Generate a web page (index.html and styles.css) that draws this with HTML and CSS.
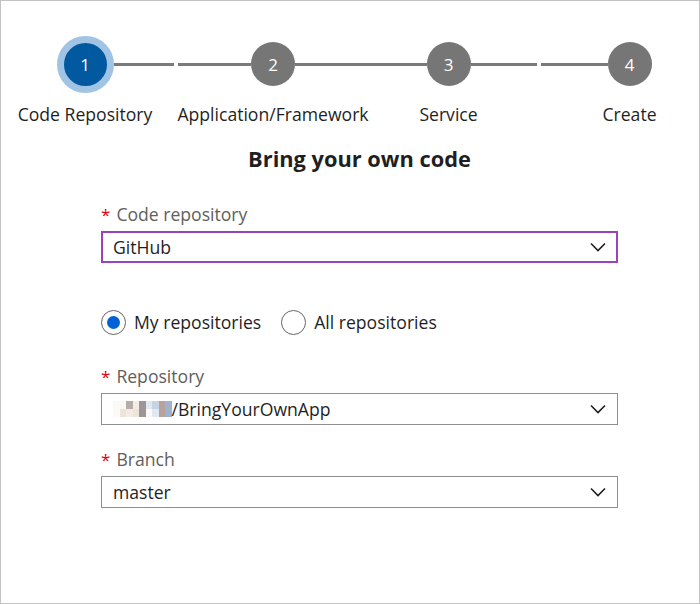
FILE: index.html
```html
<!DOCTYPE html>
<html lang="en">
<head>
<meta charset="utf-8">
<title>Bring your own code</title>
<link rel="stylesheet" href="styles.css">
</head>
<body>
<div class="frame">
  <div class="stepper">
    <div class="step step-wide">
      <div class="dot-area"><div class="dot dot-active">1</div></div>
      <div class="step-label">Code Repository</div>
    </div>
    <div class="line line-a"><span class="seg seg-a1"></span><span class="seg seg-fill"></span></div>
    <div class="step">
      <div class="dot-area"><div class="dot">2</div></div>
      <div class="step-label">Application/Framework</div>
    </div>
    <div class="line line-b"><span class="seg seg-fill"></span></div>
    <div class="step">
      <div class="dot-area"><div class="dot">3</div></div>
      <div class="step-label">Service</div>
    </div>
    <div class="line line-c"><span class="seg seg-c1"></span><span class="seg seg-fill"></span></div>
    <div class="step">
      <div class="dot-area"><div class="dot">4</div></div>
      <div class="step-label">Create</div>
    </div>
  </div>

  <div class="form">
    <h1 class="title">Bring your own code</h1>

    <div class="field field-first">
      <div class="label"><span class="req">*</span>Code repository</div>
      <div class="select select-focus">
        <span class="value">GitHub</span>
        <svg class="chev" width="16" height="10" viewBox="0 0 16 10"><path d="M1 1.5 L8 8.5 L15 1.5" fill="none" stroke="#1f1f1f" stroke-width="1.6"/></svg>
      </div>
    </div>

    <div class="radios">
      <label class="radio"><span class="ring ring-on"><span class="pip"></span></span>My repositories</label>
      <label class="radio"><span class="ring"></span>All repositories</label>
    </div>

    <div class="field field-repo">
      <div class="label"><span class="req">*</span>Repository</div>
      <div class="select">
        <span class="value"><span class="blur"><span class="blur-row"><i class="px p1"></i><i class="px p1"></i><i class="px p3"></i><i class="px p4"></i><i class="px p5"></i><i class="px p6"></i><i class="px p7"></i><i class="px p8"></i><i class="px p9"></i></span><span class="blur-row"><i class="px p1"></i><i class="px p2"></i><i class="px p4"></i><i class="px p2"></i><i class="px p5"></i><i class="px p1"></i><i class="px p6"></i><i class="px p8"></i><i class="px p9"></i></span></span>/BringYourOwnApp</span>
        <svg class="chev" width="16" height="10" viewBox="0 0 16 10"><path d="M1 1.5 L8 8.5 L15 1.5" fill="none" stroke="#1f1f1f" stroke-width="1.6"/></svg>
      </div>
    </div>

    <div class="field field-branch">
      <div class="label"><span class="req">*</span>Branch</div>
      <div class="select">
        <span class="value">master</span>
        <svg class="chev" width="16" height="10" viewBox="0 0 16 10"><path d="M1 1.5 L8 8.5 L15 1.5" fill="none" stroke="#1f1f1f" stroke-width="1.6"/></svg>
      </div>
    </div>
  </div>
</div>
</body>
</html>
```

FILE: styles.css
```css
* { box-sizing: border-box; }
html, body { margin: 0; padding: 0; background: #fff; }
body { font-family: "Segoe UI", "Open Sans", "Noto Sans", sans-serif; color: #1f1f1f; }

.frame {
  width: 700px;
  height: 604px;
  border: 1px solid #c3c3c3;
  background: #fff;
  overflow: hidden;
}

/* stepper */
.stepper {
  display: flex;
  align-items: flex-start;
  padding-left: 55.5px;
  padding-top: 34.5px;
}
.step {
  display: flex;
  flex-direction: column;
  align-items: center;
  width: 44px;
  flex: 0 0 44px;
}
.step-wide {
  width: 57px;
  flex: 0 0 57px;
}
.dot-area {
  height: 57px;
  display: flex;
  align-items: center;
  justify-content: center;
}
.dot {
  width: 44px;
  height: 44px;
  border-radius: 50%;
  background: #767676;
  color: #fff;
  font-size: 17px;
  display: flex;
  align-items: center;
  justify-content: center;
  line-height: 1;
}
.dot-active {
  width: 57px;
  height: 57px;
  background: #0159a0;
  border: 7px solid #a2c4e4;
}
.step-label {
  margin-top: 10px;
  font-size: 17.6px;
  line-height: 22px;
  white-space: nowrap;
  color: #1f1f1f;
}
.line {
  height: 57px;
  display: flex;
  align-items: center;
  gap: 4px;
  flex: 0 0 auto;
}
.line-a { width: 137.5px; }
.line-b { width: 131.5px; }
.line-c { width: 137px; }
.seg { height: 3px; background: #7a7a7a; display: block; }
.seg-a1 { width: 60.5px; }
.seg-c1 { width: 66.5px; }
.seg-fill { flex: 1; }

/* form */
.form {
  width: 517px;
  margin-left: 100px;
}
.title {
  margin: 20px 0 0;
  text-align: center;
  font-size: 21.8px;
  font-weight: 700;
  line-height: 28px;
  color: #1f1f1f;
}
.field { display: flex; flex-direction: column; }
.field-first { margin-top: 30px; }
.field-repo { margin-top: 30px; }
.field-branch { margin-top: 23px; }
.label {
  font-size: 17.6px;
  line-height: 22px;
  color: #5f5e5c;
  margin-bottom: 5px;
  display: flex;
  align-items: baseline;
}
.req {
  color: #e3000f;
  margin-right: 6px;
  font-size: 17px;
}
.select {
  height: 32px;
  border: 1px solid #8f8f8f;
  display: flex;
  align-items: center;
  justify-content: space-between;
  padding: 0 11px 0 11px;
}
.select-focus {
  border: 2px solid #9a45b6;
  padding: 0 10px 0 10px;
}
.value {
  font-size: 17.6px;
  color: #1f1f1f;
  display: flex;
  align-items: center;
}
.chev { display: block; }

.blur {
  display: inline-flex;
  flex-direction: column;
}
.blur-row { display: flex; }
.px { display: block; width: 6.5px; height: 8px; }
.p1 { background: #fbf9f7; }
.p2 { background: #efe4d8; }
.p3 { background: #b7ada6; }
.p4 { background: #f3ece4; }
.p5 { background: #9e9598; }
.p6 { background: #e2e8f1; }
.p7 { background: #c5d3e3; }
.p8 { background: #b9a19d; }
.p9 { background: #9db3cf; }

.radios {
  display: flex;
  align-items: center;
  gap: 20px;
  margin-top: 47px;
  height: 25px;
}
.radio {
  display: flex;
  align-items: center;
  font-size: 17.6px;
  color: #1f1f1f;
  gap: 8px;
}
.ring {
  width: 25px;
  height: 25px;
  border-radius: 50%;
  border: 1.5px solid #666;
  display: flex;
  align-items: center;
  justify-content: center;
}
.pip {
  width: 13px;
  height: 13px;
  border-radius: 50%;
  background: #0062d6;
}
```
